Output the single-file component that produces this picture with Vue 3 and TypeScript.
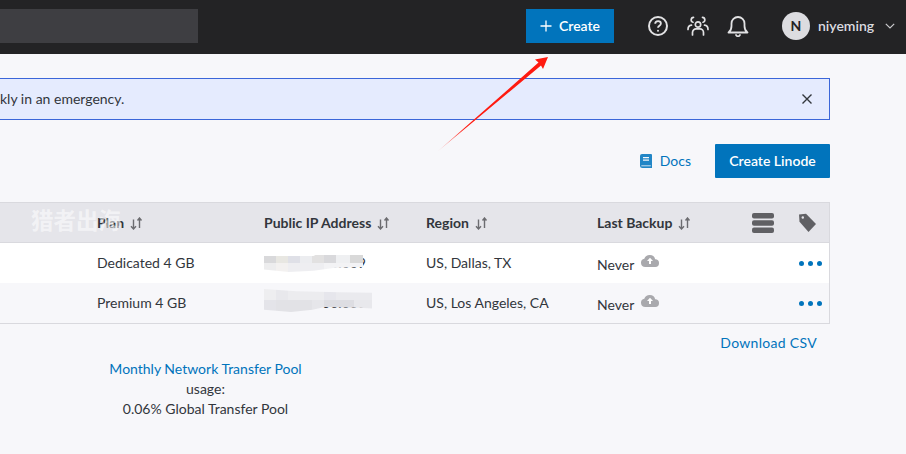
<script setup lang="ts">
interface Row {
  plan: string;
  ip: string;
  region: string;
  blur: string;
  alt: boolean;
}

const headers = [
  { label: "Plan", cls: "col-plan" },
  { label: "Public IP Address", cls: "col-ip" },
  { label: "Region", cls: "col-region" },
  { label: "Last Backup", cls: "col-backup" },
];

const rows: Row[] = [
  { plan: "Dedicated 4 GB", ip: "000.000.000.009", region: "US, Dallas, TX", blur: "blur-one", alt: false },
  { plan: "Premium 4 GB", ip: "000.000.000.000", region: "US, Los Angeles, CA", blur: "blur-two", alt: true },
];
</script>

<template>
  <div class="page">
    <header class="topbar">
      <div class="search"></div>
      <button class="create-top">
        <svg class="plus" viewBox="0 0 12 12" width="12" height="12"><path d="M6 .5v11M.5 6h11" stroke="#fff" stroke-width="1.3" fill="none" /></svg>
        <span>Create</span>
      </button>
      <div class="top-icons">
        <svg viewBox="0 0 22 22" width="22" height="22" fill="none" stroke="#e2e2e4" stroke-width="2">
          <circle cx="11" cy="11" r="9" />
          <path d="M8.2 8.8c0-1.7 1.3-2.7 2.9-2.7 1.6 0 2.8 1 2.8 2.4 0 2.200-2.900 2.200-2.900 4.300" stroke-width="1.800" />
          <circle cx="11" cy="15.800" r="1" fill="#e2e2e4" stroke="none" />
        </svg>
        <svg viewBox="0 0 22 22" width="22" height="22" fill="none" stroke="#e2e2e4" stroke-width="1.700" stroke-linecap="round">
          <circle cx="11" cy="9.500" r="2.700" />
          <path d="M5.500 20v-2.500c0-2.300 1.800-3.700 3.500-3.700h4c1.700 0 3.500 1.400 3.500 3.700V20" />
          <path d="M6.500 2.300a2.500 2.500 0 0 0-.5 4.900M15.500 2.300a2.500 2.500 0 0 1 .5 4.900" />
          <path d="M1 14.500c0-2.500 1.400-4 3.500-4.300M21 14.500c0-2.500-1.400-4-3.500-4.300" />
        </svg>
        <svg viewBox="0 0 22 22" width="22" height="22" fill="none" stroke="#e2e2e4" stroke-width="1.800" stroke-linejoin="round">
          <path d="M1.500 17.500c2.200-1.500 3-3.500 3-6.500V8.500a6.500 6.500 0 0 1 13 0V11c0 3 .8 5 3 6.500z" />
          <path d="M9 20a2.200 2.200 0 0 0 4 0" stroke-linecap="round" />
        </svg>
      </div>
      <div class="user">
        <span class="avatar">N</span>
        <span class="username">niyeming</span>
        <svg class="chev" viewBox="0 0 10 6" width="10" height="6"><path d="M.8.8 5 5 9.200.8" fill="none" stroke="#c9c9cc" stroke-width="1.200" /></svg>
      </div>
    </header>

    <main class="content">
      <section class="banner">
        <span class="banner-text">kly in an emergency.</span>
        <svg class="close" viewBox="0 0 10 10" width="10" height="10"><path d="M.5.5l9 9M9.500.5l-9 9" stroke="#32363c" stroke-width="1.400" fill="none" /></svg>
      </section>

      <div class="actions">
        <a class="docs">
          <svg viewBox="0 0 12 14" width="12" height="14"><path d="M2 0h9a1 1 0 0 1 1 1v13H2.500A2.500 2.500 0 0 1 0 11.500V2a2 2 0 0 1 2-2z" fill="#2286c6" /><path d="M3 3h6v1.300H3zM3 5.500h6v1.300H3z" fill="#f7f7fa" /><path d="M1.300 11.800h9.500" stroke="#f7f7fa" stroke-width=".8" /></svg>
          <span>Docs</span>
        </a>
        <button class="create-linode">Create Linode</button>
      </div>

      <section class="table">
        <div class="row head">
          <div class="cell"></div>
          <div v-for="h in headers" :key="h.label" class="cell th" :class="h.cls">
            <span>{{ h.label }}</span>
            <svg class="sort" viewBox="0 0 13 13" width="13" height="13" fill="none" stroke="#6c6c70" stroke-width="1.400">
              <path d="M3.500 2.500V12M1 9.300 3.500 12 6 9.300" />
              <path d="M9.500 11V1M7.500 3.500 9.500 1l2 2.500" />
            </svg>
          </div>
          <div class="cell">
            <svg viewBox="0 0 22 20" width="22" height="20" fill="#606064"><rect width="22" height="5.500" rx="2" /><rect y="7.200" width="22" height="5.500" rx="2" /><rect y="14.500" width="22" height="5.500" rx="2" /></svg>
          </div>
          <div class="cell">
            <svg viewBox="0 0 19 20" width="19" height="20"><path d="M1 1.500 8 .8l10 10.200-7.500 8L1.500 8.800z" fill="#606064" /><circle cx="4.800" cy="4.500" r="1.200" fill="#e5e5ea" /><path d="M10 1l8.200 8.300" stroke="#e5e5ea" stroke-width=".9" fill="none" /></svg>
          </div>
        </div>

        <div v-for="r in rows" :key="r.plan" class="row body" :class="{ alt: r.alt }">
          <div class="cell"></div>
          <div class="cell">{{ r.plan }}</div>
          <div class="cell ip">
            <span class="ip-text">{{ r.ip }}</span>
            <span class="blur" :class="r.blur"></span>
          </div>
          <div class="cell">{{ r.region }}</div>
          <div class="cell backup">
            <span class="never">Never</span>
            <svg class="cloud" viewBox="0 0 18 13" width="18" height="13"><path d="M4.200 13A4.200 4.200 0 0 1 3.300 4.700 5.800 5.800 0 0 1 14.200 5.200 3.900 3.900 0 0 1 14 13z" fill="#a9a9ad" /><path d="M9 3.700l3 3.300H10v3H8V7H6z" fill="#fff" /></svg>
          </div>
          <div class="cell"></div>
          <div class="cell dots"><i></i><i></i><i></i></div>
        </div>
      </section>

      <div class="csv-row"><a class="link">Download CSV</a></div>

      <p class="pool">
        <span class="pool-line"><a class="link">Monthly Network Transfer Pool</a> usage:</span>
        <span class="pool-line">0.06% Global Transfer Pool</span>
      </p>
    </main>

    <div class="watermark">猎者出海</div>
    <svg class="arrow" viewBox="0 0 906 454" width="906" height="454">
      <defs>
        <linearGradient id="arrowFade" x1="437" y1="152" x2="548" y2="57" gradientUnits="userSpaceOnUse">
          <stop offset="0" stop-color="#ff1a10" stop-opacity="0.15" />
          <stop offset="0.25" stop-color="#ff1a10" />
          <stop offset="1" stop-color="#ff1a10" />
        </linearGradient>
      </defs>
      <polygon points="548,57 535,59.500 538.500,62.500 437,152 541,65.500 543,69" fill="url(#arrowFade)" />
    </svg>
  </div>
</template>

<style>
html, body { margin: 0; background: #f7f7fa; overflow: hidden; }
</style>

<style scoped>
.page {
  position: relative;
  width: 906px;
  height: 454px;
  overflow: hidden;
  background: #f7f7fa;
  color: #32363c;
  font: 14px/20px Lato, "Noto Sans CJK SC", sans-serif;
}
.topbar {
  height: 54px;
  background: #232325;
  display: flex;
  align-items: center;
  box-sizing: border-box;
}
.search {
  width: 198px;
  height: 34px;
  background: #3e3e42;
  margin-bottom: 2px;
}
.create-top {
  margin: 0 0 2px 328px;
  width: 88px;
  height: 34px;
  background: #0174bc;
  border: 0;
  color: #fff;
  font: 600 14px/20px Lato, sans-serif;
  display: flex;
  align-items: center;
  justify-content: center;
  gap: 7px;
  padding: 0;
}
.top-icons {
  display: flex;
  gap: 18px;
  margin-left: 33px;
  margin-bottom: 2px;
}
.user {
  display: flex;
  align-items: center;
  margin-left: 33px;
  margin-bottom: 2px;
}
.avatar {
  width: 28px;
  height: 28px;
  border-radius: 50%;
  background: #dcdce0;
  color: #232325;
  font-weight: 700;
  text-align: center;
  line-height: 28px;
}
.username { margin-left: 8px; color: #dcdce0; font-weight: 600; }
.chev { margin-left: 11px; }

.content { width: 830px; padding-top: 24px; }
.banner {
  height: 42px;
  box-sizing: border-box;
  background: #e5ebfe;
  border: 1px solid #3b66d9;
  border-left: 0;
  display: flex;
  align-items: center;
  justify-content: space-between;
  padding-right: 17px;
}
.banner-text { display: block; }
.actions {
  display: flex;
  justify-content: flex-end;
  align-items: center;
  margin: 24px 0;
}
.docs {
  display: flex;
  align-items: center;
  gap: 8px;
  color: #0174bc;
  margin-right: 24px;
}
.create-linode {
  width: 115px;
  height: 34px;
  background: #0174bc;
  border: 0;
  border-radius: 1px;
  color: #fff;
  font: 600 14px/20px Lato, sans-serif;
  padding: 0;
}
.table {
  border: 1px solid #d9d9de;
  border-left: 0;
}
.row {
  display: grid;
  grid-template-columns: 97px 167px 162px 171px 155px 46px 1fr;
  height: 40px;
}
.head { background: #e5e5ea; border-bottom: 1px solid #d9d9de; height: 40px; box-sizing: border-box; }
.body { background: #fff; }
.body.alt { background: #f7f7fa; }
.table .row.body { height: 40px; }
.cell { display: flex; align-items: center; position: relative; }
.th { font-weight: 700; gap: 6px; }
.sort { margin-top: 1px; }
.ip-text { margin-left: 0; color: #32363c; width: 102px; text-align: right; white-space: nowrap; overflow: hidden; direction: rtl; }
.blur { position: absolute; left: 0; }
.blur-one {
  top: 12px;
  width: 99px;
  height: 17px;
  background:
    linear-gradient(90deg, #d9d9db 0 12px, #e8e7e2 12px 24px, #dfe0e7 24px 36px, #ecedf0 36px 48px, #e2e1e1 48px 60px, #d9d9dc 60px 72px, #eff0f2 72px 86px, #d9d9d9 86px) top / 100% 8px no-repeat,
    linear-gradient(90deg, #ededee 0 12px, #f3f1f0 12px 24px, #eeeef1 24px 60px, #f3f3f5 60px) bottom / 100% 9px no-repeat;
  clip-path: polygon(0 6%, 50% 6%, 52% 0, 100% 0, 100% 70%, 70% 76%, 50% 92%, 25% 100%, 0 85%);
}
.blur-two {
  top: 6px;
  width: 108px;
  height: 23px;
  background:
    linear-gradient(90deg, #eeeef0 0 12px, #e8e8ec 12px 24px, #ececef 24px 60px, #e6e6ec 60px 72px, #eaeaee 72px) top / 100% 11px no-repeat,
    linear-gradient(90deg, #e4e4e9 0 12px, #e2e2e6 12px 48px, #e6e6ea 48px 60px, #dddde2 60px 90px, #e8e8ec 90px) bottom / 100% 12px no-repeat;
  clip-path: polygon(0 0, 30% 10%, 70% 14%, 100% 16%, 100% 85%, 88% 82%, 56% 78%, 45% 90%, 25% 100%, 0 90%);
}
.backup { align-items: center; }
.never { margin-top: 3px; }
.cloud { margin: 0 0 6px 7px; }
.dots { gap: 4px; justify-content: flex-start; padding-left: 1px; }
.dots i { width: 5px; height: 5px; border-radius: 50%; background: #0174bc; margin-top: 1px; }
.csv-row { display: flex; justify-content: flex-end; padding: 9px 13px 0 0; }
.link { color: #0174bc; }
.csv-row .link { letter-spacing: 0.3px; }
.pool { margin: 6px 0 0 90px; width: 231px; text-align: center; }
.pool-line { display: block; }

.watermark {
  position: absolute;
  left: 31px;
  top: 206px;
  font: 700 22.500px/26px "Noto Sans CJK SC", sans-serif;
  color: rgba(255, 255, 255, 0.55);
  white-space: nowrap;
}
.arrow { position: absolute; left: 0; top: 0; pointer-events: none; }
</style>
